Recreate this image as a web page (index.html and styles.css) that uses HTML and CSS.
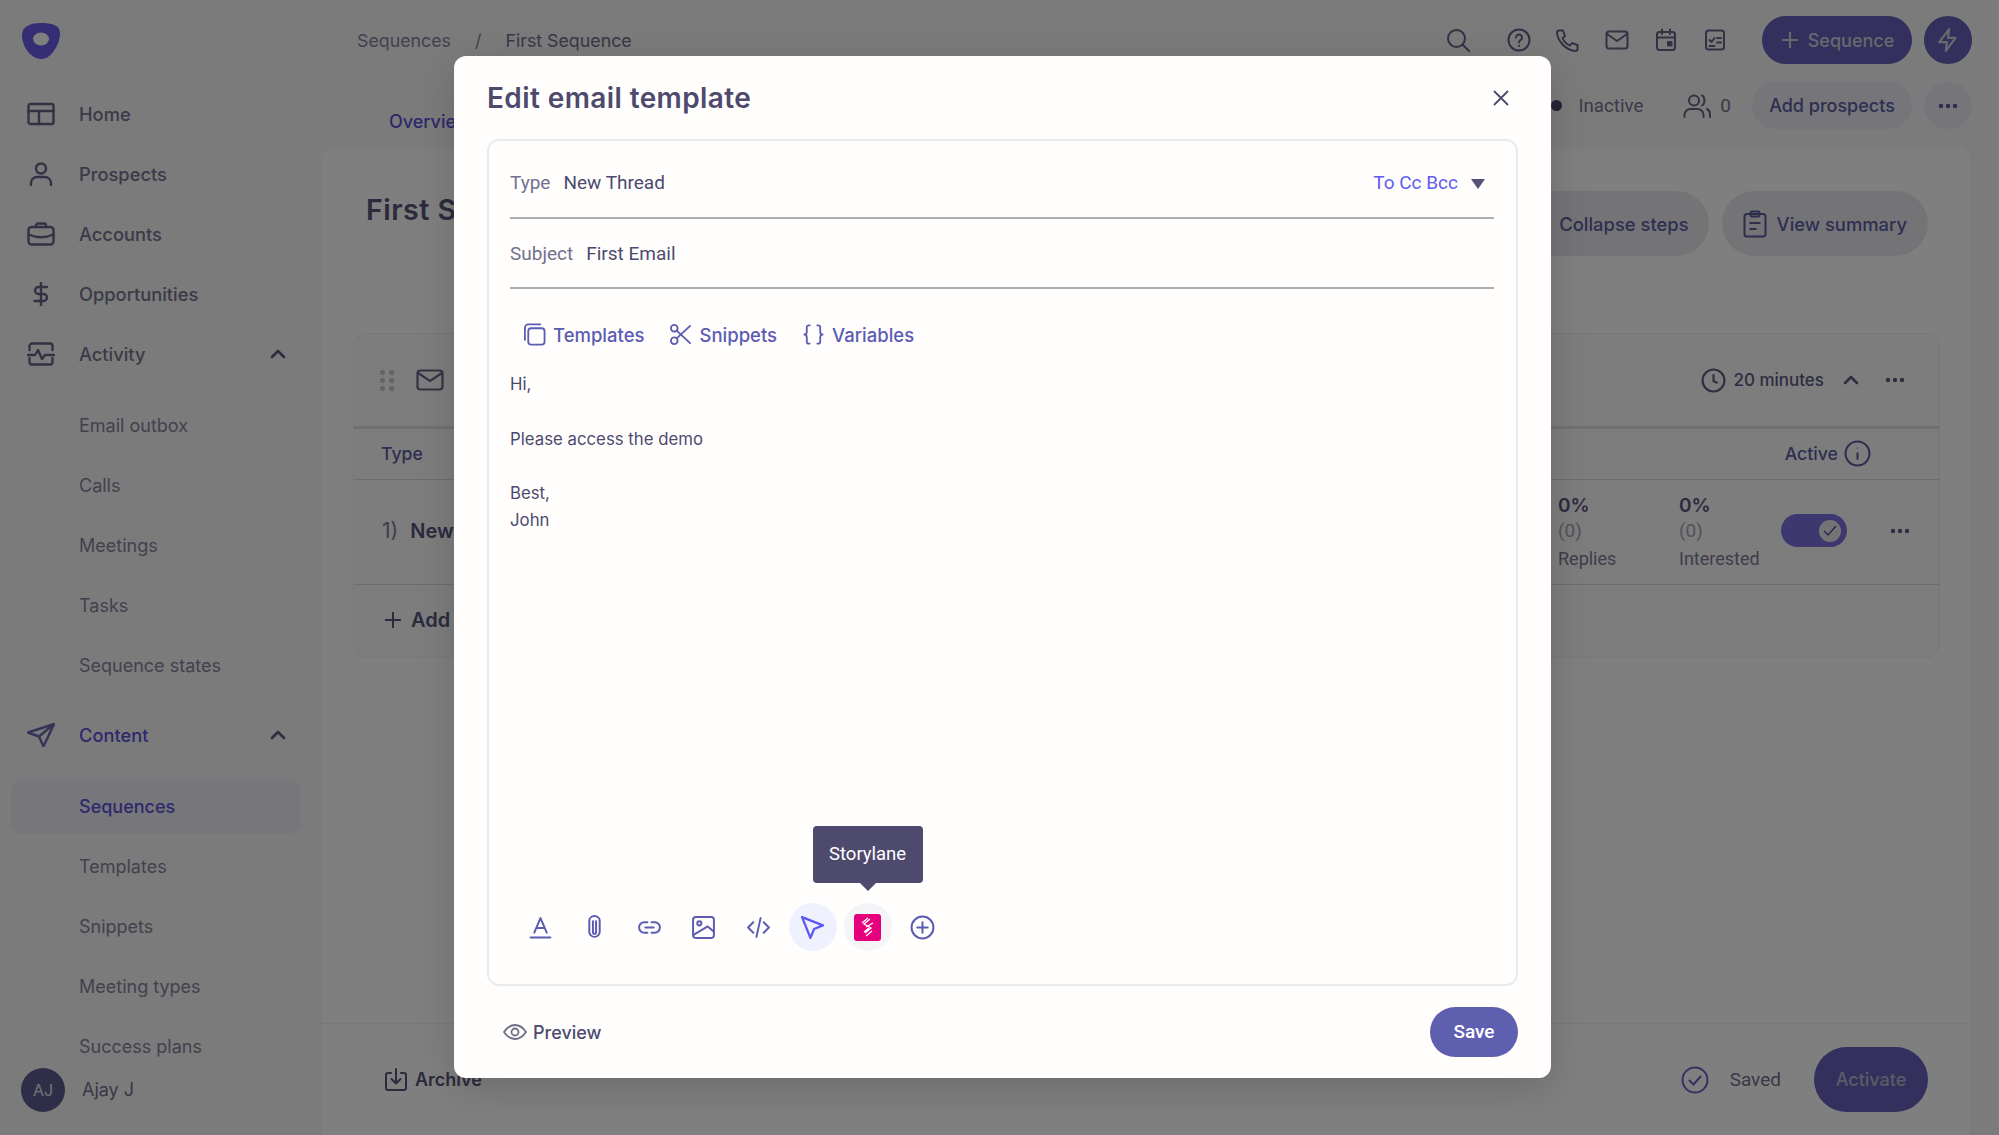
FILE: index.html
```html
<!DOCTYPE html>
<html lang="en">
<head>
    <meta charset="UTF-8">
    <title>Edit email template</title>
    <link rel="stylesheet" href="styles.css">
</head>
<body>
<svg class="defs" width="0" height="0">
    <symbol id="dots" viewBox="0 0 20 6"><circle cx="3" cy="3" r="2.2"/><circle cx="10" cy="3" r="2.2"/><circle cx="17" cy="3" r="2.2"/></symbol>
    <symbol id="up" viewBox="0 0 16 10"><path d="M2 8l6-6 6 6" fill="none" stroke="currentColor" stroke-width="2.6" stroke-linecap="round" stroke-linejoin="round"/></symbol>
</svg>
<div class="app">
    <!-- sidebar -->
    <aside class="side">
        <div class="logo">
            <svg width="38" height="36" viewBox="0 0 38 36"><path d="M19 0c10 0 19 2 19 10 0 12-9 26-19 26C9 36 0 24 0 12 0 3 9 0 19 0z" fill="#6a5ce8"/><ellipse cx="19" cy="16" rx="8" ry="6.5" fill="#fff"/></svg>
        </div>
        <div class="nav">
            <a class="nav-item">
                <svg class="nav-ico" viewBox="0 0 28 24"><rect x="1.5" y="2" width="25" height="20" rx="2"/><path d="M1.5 9h25M12 9v13"/></svg>
                Home
            </a>
            <a class="nav-item">
                <svg class="nav-ico" viewBox="0 0 28 24"><circle cx="14" cy="6.5" r="5"/><path d="M4 23v-2a6 6 0 0 1 6-6h8a6 6 0 0 1 6 6v2"/></svg>
                Prospects
            </a>
            <a class="nav-item">
                <svg class="nav-ico" viewBox="0 0 28 24"><rect x="1.5" y="5" width="25" height="17.5" rx="3"/><path d="M9 5V3.5a2 2 0 0 1 2-2h6a2 2 0 0 1 2 2V5M1.5 12.5c8 3.5 17 3.5 25 0"/></svg>
                Accounts
            </a>
            <a class="nav-item">
                <svg class="nav-ico" viewBox="0 0 28 24"><path d="M14 0v24M20 5h-8.5a3.5 3.5 0 0 0 0 7h5a3.5 3.5 0 0 1 0 7H7.500"/></svg>
                Opportunities
            </a>
            <a class="nav-item">
                <svg class="nav-ico" viewBox="0 0 28 24"><path d="M2.500 8V4A2.500 2.500 0 0 1 5 1.500h18A2.500 2.500 0 0 1 25.500 4v4M2.500 16v4A2.500 2.500 0 0 0 5 22.500h18a2.500 2.500 0 0 0 2.500-2.500v-4M1 13h7l3-5 4 9 3-4h9"/></svg>
                Activity
                <svg class="chev"><use href="#up"/></svg>
            </a>
            <div class="sub">
                <a class="sub-item">Email outbox</a>
                <a class="sub-item">Calls</a>
                <a class="sub-item">Meetings</a>
                <a class="sub-item">Tasks</a>
                <a class="sub-item">Sequence states</a>
            </div>
            <a class="nav-item current">
                <svg class="nav-ico" viewBox="0 0 28 24"><path d="M27 1L1 9.500l11 4 4.500 10L27 1zM12 13.500L27 1"/></svg>
                Content
                <svg class="chev"><use href="#up"/></svg>
            </a>
            <div class="sub">
                <a class="sub-item active">Sequences</a>
                <a class="sub-item">Templates</a>
                <a class="sub-item">Snippets</a>
                <a class="sub-item">Meeting types</a>
                <a class="sub-item">Success plans</a>
            </div>
        </div>
        <div class="user">
            <span class="avatar">AJ</span>
            Ajay J
        </div>
    </aside>

    <div class="main">
        <!-- top bar -->
        <div class="top">
            <div class="crumbs"><span>Sequences</span><span>/</span><span class="crumb-now">First Sequence</span></div>
            <div class="top-icons">
                <svg class="t-ico search" viewBox="0 0 24 24"><circle cx="10.500" cy="10.500" r="8.500"/><path d="M17 17l6 6"/></svg>
                <svg class="t-ico help" viewBox="0 0 24 24"><circle cx="12" cy="12" r="10.500"/><path d="M9 9.500a3 3 0 1 1 4.500 2.600c-1 .6-1.500 1.200-1.500 2.400M12 17.800v.2"/></svg>
                <svg class="t-ico" viewBox="0 0 24 24"><path d="M3 2.500h4l2 5.500-2.500 2a13 13 0 0 0 7.500 7.500l2-2.500 5.500 2v4c0 1-1 2-2 2C10 22.500 1.500 13 1 4.500c0-1 1-2 2-2z"/></svg>
                <svg class="t-ico" viewBox="0 0 24 24"><rect x="1.500" y="3.500" width="21" height="17" rx="2.500"/><path d="M2 6l10 7 10-7"/></svg>
                <svg class="t-ico" viewBox="0 0 24 24"><rect x="3" y="4" width="18" height="18" rx="2.500"/><path d="M3 9.500h18M8 1.500V6M16 1.500V6"/><rect x="14" y="14" width="3.500" height="3.500" fill="currentColor"/></svg>
                <svg class="t-ico" viewBox="0 0 24 24"><rect x="3" y="2.500" width="18" height="19" rx="2.500"/><path d="M6.500 12l2 2 3-4M14 10h4M14 14.500h4M6.500 18h5"/></svg>
            </div>
            <a class="btn-seq">
                <svg class="plus" viewBox="0 0 20 20"><path d="M10 2v16M2 10h16"/></svg>
                Sequence
            </a>
            <a class="btn-round dark">
                <svg viewBox="0 0 24 24" width="26" height="26"><path d="M13 2L4 14h7l-1 8 9-12h-7l1-8z" fill="none" stroke="currentColor" stroke-width="2" stroke-linejoin="round"/></svg>
            </a>
        </div>

        <!-- tabs -->
        <div class="tabs">
            <a class="tab">Overview</a>
            <div class="tabs-right">
                <span class="status-dot"></span>
                <span class="status">Inactive</span>
                <svg class="t-ico people" viewBox="0 0 28 24"><circle cx="11" cy="6.500" r="5"/><path d="M1.500 23v-2a6 6 0 0 1 6-6h7a6 6 0 0 1 6 6v2M19 1.500c3 1 3.500 8 0 10M24 15c2 1 3 3 3 6v2"/></svg>
                <span class="count">0</span>
                <a class="btn-add">Add prospects</a>
                <a class="btn-round soft"><svg width="20" height="6"><use href="#dots"/></svg></a>
            </div>
        </div>

        <!-- sequence panel -->
        <div class="panel">
            <div class="panel-head">
                <h1 class="panel-title">First Sequence</h1>
                <div class="panel-btns">
                    <a class="btn-soft collapse">Collapse steps</a>
                    <a class="btn-soft summary">
                        <svg class="clip" viewBox="0 0 24 28"><rect x="1.500" y="4" width="21" height="22.500" rx="2.500"/><rect x="7.500" y="1.500" width="9" height="5" rx="1.500"/><path d="M6.500 13h11M6.500 19h7"/></svg>
                        View summary
                    </a>
                </div>
            </div>

            <div class="step">
                <div class="step-head">
                    <span class="grip"><i></i><i></i><i></i><i></i><i></i><i></i></span>
                    <svg class="step-mail" viewBox="0 0 28 22"><rect x="1.500" y="1.500" width="25" height="19" rx="3"/><path d="M2 4l12 8 12-8"/></svg>
                    <div class="step-right">
                        <svg class="clock" viewBox="0 0 24 24"><circle cx="12" cy="12" r="10.500"/><path d="M12 6v6.500l4 2"/></svg>
                        <span class="mins">20 minutes</span>
                        <svg class="chev small"><use href="#up"/></svg>
                        <svg class="more"><use href="#dots"/></svg>
                    </div>
                </div>
                <div class="step-cols">
                    <span>Type</span>
                    <div class="cols-right">
                        <span>Active</span>
                        <svg class="info" viewBox="0 0 26 26"><circle cx="13" cy="13" r="11.500"/><path d="M13 12v7M13 7.500v.5"/></svg>
                    </div>
                </div>
                <div class="step-row">
                    <span class="row-name"><span class="row-num">1)</span> New</span>
                    <div class="row-right">
                        <div class="stat"><b>0%</b><span class="paren">(0)</span><span>Replies</span></div>
                        <div class="stat wide"><b>0%</b><span class="paren">(0)</span><span>Interested</span></div>
                        <span class="toggle"><span class="knob"><svg width="14" height="12" viewBox="0 0 14 12"><path d="M1 6l4 4 8-9" fill="none" stroke="#4038a0" stroke-width="1.200"/></svg></span></span>
                        <svg class="more"><use href="#dots"/></svg>
                    </div>
                </div>
                <div class="step-add">
                    <svg class="plus" viewBox="0 0 20 20"><path d="M10 2v16M2 10h16"/></svg>
                    Add step
                </div>
            </div>

            <div class="bottom">
                <a class="archive">
                    <svg class="t-ico" viewBox="0 0 24 24"><path d="M7 5H4a2 2 0 0 0-2 2v13a2 2 0 0 0 2 2h16a2 2 0 0 0 2-2V7a2 2 0 0 0-2-2h-3M12 1v14M7.500 11l4.500 4.500 4.500-4.500"/></svg>
                    Archive
                </a>
                <div class="bottom-right">
                    <svg class="saved-ico" viewBox="0 0 28 28"><circle cx="14" cy="14" r="12.500"/><path d="M8 14l4.500 4.500L20 10"/></svg>
                    <span class="saved">Saved</span>
                    <a class="btn-activate">Activate</a>
                </div>
            </div>
        </div>
    </div>
</div>

<div class="scrim"></div>

<!-- modal -->
<div class="modal">
    <div class="modal-head">
        <h2>Edit email template</h2>
        <svg class="close" viewBox="0 0 18 18"><path d="M2 2l14 14M16 2L2 16"/></svg>
    </div>
    <div class="editor">
        <div class="field type-field">
            <label>Type</label><span>New Thread</span>
            <a class="to-cc">To Cc Bcc</a>
            <svg class="caret" width="14" height="10" viewBox="0 0 14 10"><path d="M0 0h14L7 10z"/></svg>
        </div>
        <div class="field subject-field">
            <label>Subject</label><span>First Email</span>
        </div>
        <div class="inserts">
            <a class="insert">
                <svg class="i-ico" viewBox="0 0 24 24"><rect x="5.500" y="5.500" width="17" height="17" rx="3"/><path d="M2 17.500V5a3.500 3.500 0 0 1 3.500-3.500H18"/></svg>
                Templates
            </a>
            <a class="insert">
                <svg class="i-ico" viewBox="0 0 24 24"><circle cx="5.500" cy="5.500" r="3.500"/><circle cx="5.500" cy="18.500" r="3.500"/><path d="M8 8l14 13M8 16L22 3"/></svg>
                Snippets
            </a>
            <a class="insert">
                <svg class="i-ico" viewBox="0 0 24 24"><path d="M8 2.500H7a2 2 0 0 0-2 2V9c0 1.500-1 3-2.500 3C4 12 5 13.500 5 15v4.500a2 2 0 0 0 2 2h1M16 2.500h1a2 2 0 0 1 2 2V9c0 1.500 1 3 2.500 3-1.500 0-2.500 1.500-2.500 3v4.500a2 2 0 0 1-2 2h-1"/></svg>
                Variables
            </a>
        </div>
        <div class="mail-body">
            <p>Hi,</p>
            <p><br></p>
            <p>Please access the demo</p>
            <p><br></p>
            <p>Best,</p>
            <p>John</p>
        </div>
        <div class="tools">
            <span class="tool">
                <svg class="tool-ico" viewBox="0 0 24 24"><path d="M6 17L12 3l6 14M8 12.500h8M2.500 21.500h19"/></svg>
            </span>
            <span class="tool">
                <svg class="tool-ico" viewBox="0 0 24 24"><path d="M7 5.500V16a5 5 0 0 0 10 0V5.500a5 4.500 0 0 0-10 0M10.500 6v10.500a1.500 1.500 0 0 0 3 0V6"/></svg>
            </span>
            <span class="tool">
                <svg class="tool-ico" viewBox="0 0 24 24"><path d="M10 7H7a5 5 0 0 0 0 10h3M14 7h3a5 5 0 0 1 0 10h-3M8 12h8"/></svg>
            </span>
            <span class="tool">
                <svg class="tool-ico" viewBox="0 0 24 24"><rect x="2" y="2" width="20" height="20" rx="2.500"/><circle cx="8" cy="8" r="2"/><path d="M2.500 19L16 11l6 5"/></svg>
            </span>
            <span class="tool">
                <svg class="tool-ico" viewBox="0 0 24 24"><path d="M7 7l-5 5 5 5M17 7l5 5-5 5M14 3l-4 18"/></svg>
            </span>
            <span class="tool tool-on">
                <svg class="tool-ico arrow" viewBox="0 0 24 24"><path d="M2 2l20 8-8.500 3.500L10 22 2 2z"/></svg>
            </span>
            <span class="tool tool-hover">
                <span class="tip">Storylane</span>
                <svg class="story" width="27" height="27" viewBox="0 0 27 27"><rect width="27" height="27" rx="3" fill="#e6007e"/><path d="M16 5l-6 5 7 4-6 5M14 4l-6 5M19 9l-7 4M15 14l-5 4M18 17l-6 5" fill="none" stroke="#fff" stroke-width="1.300"/></svg>
            </span>
            <span class="tool">
                <svg class="tool-ico" viewBox="0 0 24 24"><circle cx="12" cy="12" r="10.500"/><path d="M12 7v10M7 12h10"/></svg>
            </span>
        </div>
    </div>
    <div class="modal-foot">
        <a class="preview">
            <svg class="eye" viewBox="0 0 24 16"><path d="M1 8c3-4.500 7-7 11-7s8 2.500 11 7c-3 4.500-7 7-11 7S4 12.500 1 8z"/><circle cx="12" cy="8" r="3.500"/></svg>
            Preview
        </a>
        <a class="btn-save">Save</a>
    </div>
</div>
</body>
</html>
```

FILE: styles.css
```css
* {
    margin: 0;
    padding: 0;
    box-sizing: border-box;
}
html, body {
    width: 1999px;
    height: 1135px;
    overflow: hidden;
}
body {
    position: relative;
    background: #f6f6f7;
    font-family: "Inter", "Noto Sans", sans-serif;
    font-size: 18px;
    color: #5c5a80;
}
.defs {
    position: absolute;
}
svg {
    flex: none;
    display: block;
}
.app {
    display: flex;
    height: 1135px;
}

/* sidebar */
.side {
    width: 322px;
    flex: none;
    display: flex;
    flex-direction: column;
}
.logo {
    height: 84px;
    flex: none;
    padding: 23px 0 0 22px;
}
.nav {
    flex: 1;
    min-height: 0;
    overflow: hidden;
}
.nav-item {
    height: 60px;
    display: flex;
    align-items: center;
    padding: 0 36px 0 27px;
    font-size: 18.3px;
    font-weight: 500;
    color: #747490;
}
.nav-ico {
    width: 28px;
    height: 24px;
    margin-right: 24px;
    fill: none;
    stroke: #64648a;
    stroke-width: 2.4;
    stroke-linejoin: round;
    stroke-linecap: round;
}
.chev {
    width: 16px;
    height: 10px;
    margin-left: auto;
    color: #5c5a80;
}
.nav-item.current {
    color: #5a52d8;
}
.nav-item.current .nav-ico {
    stroke: #6a68b0;
}
.sub {
    padding: 11px 0 10px;
}
.sub-item {
    height: 60px;
    display: flex;
    align-items: center;
    padding-left: 79px;
    color: #84849c;
}
.sub-item.active {
    height: 55px;
    margin: 2.5px 22px 2.5px 11px;
    padding-left: 68px;
    border-radius: 12px;
    background: #ededf6;
    color: #5a52d8;
    font-weight: 500;
}
.user {
    height: 71px;
    flex: none;
    display: flex;
    align-items: flex-start;
    gap: 17px;
    padding: 4px 0 0 21px;
    line-height: 44px;
    color: #70708c;
}
.avatar {
    width: 44px;
    height: 44px;
    border-radius: 50%;
    background: #5e5c90;
    color: #e4e4ee;
    font-size: 16px;
    text-align: center;
}

/* top bar */
.main {
    flex: 1;
    min-width: 0;
    display: flex;
    flex-direction: column;
}
.top {
    height: 80px;
    flex: none;
    display: flex;
    align-items: center;
    padding: 0 27px 0 35px;
}
.crumbs {
    display: flex;
    gap: 24px;
    font-size: 17.8px;
    color: #84849c;
}
.crumb-now {
    color: #70708c;
}
.top-icons {
    margin-left: auto;
    display: flex;
    align-items: center;
    gap: 25px;
    margin-right: 35px;
    color: #64648a;
}
.t-ico {
    width: 24px;
    height: 24px;
    fill: none;
    stroke: currentColor;
    stroke-width: 2;
    stroke-linejoin: round;
    stroke-linecap: round;
}
.t-ico.search {
    margin-right: 12px;
}
.btn-seq {
    width: 150px;
    height: 48px;
    display: flex;
    align-items: center;
    justify-content: center;
    gap: 8px;
    border-radius: 24px;
    background: #6660bc;
    color: #d0d0dc;
    font-weight: 500;
}
.plus {
    width: 20px;
    height: 20px;
    fill: none;
    stroke: currentColor;
    stroke-width: 2;
}
.btn-round {
    width: 48px;
    height: 48px;
    margin-left: 12px;
    display: flex;
    align-items: center;
    justify-content: center;
    border-radius: 50%;
}
.btn-round.dark {
    background: #6660bc;
    color: #d0d0dc;
}
.btn-round.soft {
    background: #ecebf4;
    fill: #5c5a9c;
    height: 47px;
}

/* tabs */
.tabs {
    height: 68px;
    flex: none;
    display: flex;
    padding: 3px 27px 0 67px;
}
.tab {
    align-self: flex-end;
    padding-bottom: 16px;
    color: #5a52d8;
    font-weight: 500;
}
.tabs-right {
    margin-left: auto;
    height: 47px;
    display: flex;
    align-items: center;
    margin-top: -1px;
}
.status-dot {
    width: 11px;
    height: 11px;
    margin-right: 16px;
    border-radius: 50%;
    background: #4a4a68;
}
.status {
    font-family: "Roboto", sans-serif;
    font-size: 18.7px;
    color: #747490;
    margin-right: 40px;
}
.people {
    width: 28px;
    margin-right: 9px;
    color: #64648a;
}
.count {
    font-family: "Roboto", sans-serif;
    font-size: 19px;
    color: #747490;
    margin-right: 21px;
}
.btn-add {
    width: 160px;
    height: 47px;
    border-radius: 24px;
    background: #ecebf4;
    text-align: center;
    line-height: 47px;
    font-weight: 500;
    color: #5c5ca0;
}

/* panel */
.panel {
    flex: 1;
    min-height: 0;
    margin-right: 29px;
    display: flex;
    flex-direction: column;
    border-radius: 12px 12px 0 0;
    background: #fff;
}
.panel-head {
    height: 185px;
    flex: none;
    display: flex;
    justify-content: space-between;
    padding: 43px 42px 0 44px;
}
.panel-title {
    font-size: 28.5px;
    font-weight: 600;
    letter-spacing: 0.5px;
    line-height: 38px;
    color: #56567a;
}
.panel-btns {
    display: flex;
    gap: 13px;
}
.btn-soft {
    height: 65px;
    display: flex;
    align-items: center;
    gap: 10px;
    border-radius: 33px;
    background: #e8e8ef;
    font-size: 18.4px;
    font-weight: 500;
    color: #5c5ca0;
}
.collapse {
    padding: 0 20px 0 60px;
}
.summary {
    padding: 0 21px 0 21px;
}
.clip {
    width: 24px;
    height: 28px;
    fill: none;
    stroke: #5c5a9c;
    stroke-width: 2;
}

/* step card */
.step {
    margin: 0 30px 0 31px;
    border: 1px solid #efeff2;
    border-radius: 14px;
    background: #fbfbfc;
}
.step-head {
    height: 95px;
    display: flex;
    align-items: center;
    padding: 0 34px 0 26px;
    border-bottom: 3px solid #e0e0e4;
}
.grip {
    width: 14px;
    display: grid;
    grid-template-columns: 5px 5px;
    gap: 3px 4px;
    margin-right: 22px;
}
.grip i {
    height: 5px;
    border-radius: 50%;
    background: #c4c4cc;
}
.step-mail {
    width: 28px;
    height: 22px;
    fill: none;
    stroke: #66668a;
    stroke-width: 2.2;
}
.step-right {
    margin-left: auto;
    display: flex;
    align-items: center;
}
.clock {
    width: 25px;
    height: 25px;
    margin-right: 7px;
    fill: none;
    stroke: #5c5c80;
    stroke-width: 2;
}
.mins {
    font-size: 17px;
    font-weight: 500;
    color: #5c5c80;
    margin-right: 19px;
}
.chev.small {
    margin: 0 26px 0 0;
}
.more {
    width: 20px;
    height: 6px;
    fill: #5c5c80;
}
.step-cols {
    height: 51px;
    display: flex;
    align-items: center;
    justify-content: space-between;
    padding: 0 68px 2px 27px;
    border-bottom: 1px solid #d8d8dc;
    font-size: 17.7px;
    font-weight: 500;
    color: #5c5ca0;
}
.cols-right {
    display: flex;
    align-items: center;
    gap: 6px;
}
.info {
    width: 27px;
    height: 27px;
    fill: none;
    stroke: #5e5ca0;
    stroke-width: 2;
}
.step-row {
    height: 105px;
    display: flex;
    align-items: center;
    justify-content: space-between;
    padding: 0 29px 3px 28px;
    border-bottom: 1px solid #d8d8dc;
}
.row-name {
    font-weight: 600;
    font-size: 20px;
    color: #56567a;
}
.row-num {
    font-weight: 400;
    font-size: 21px;
    color: #7c7c98;
    margin-right: 7px;
}
.row-right {
    display: flex;
    align-items: center;
}
.stat {
    width: 121px;
    display: flex;
    flex-direction: column;
    font-family: "Roboto", sans-serif;
    line-height: 28px;
    color: #7c7c98;
}
.stat.wide {
    width: 102px;
}
.stat b {
    font-family: "Inter", sans-serif;
    font-size: 19px;
    font-weight: 600;
    line-height: 23px;
    margin-top: 5px;
    color: #56567a;
}
.paren {
    color: #a4a4b4;
    font-size: 19px;
}
.toggle {
    width: 66px;
    height: 33px;
    margin-right: 43px;
    display: flex;
    justify-content: flex-end;
    align-items: center;
    padding-right: 6px;
    border-radius: 17px;
    background: #7a70e0;
}
.knob {
    width: 22px;
    height: 22px;
    display: flex;
    align-items: center;
    justify-content: center;
    border-radius: 50%;
    background: #e8e8ee;
}
.step-add {
    height: 72px;
    display: flex;
    align-items: center;
    gap: 8px;
    padding: 0 0 3px 29px;
    font-size: 20px;
    font-weight: 600;
    color: #56567a;
}
.bottom {
    margin-top: auto;
    height: 112px;
    flex: none;
    display: flex;
    justify-content: space-between;
    padding: 23px 42px 0 62px;
    border-top: 1px solid #f0f0f2;
}
.archive {
    height: 65px;
    display: flex;
    align-items: center;
    gap: 7px;
    font-weight: 600;
    color: #56567a;
}
.bottom-right {
    display: flex;
    align-items: center;
    height: 65px;
}
.saved-ico {
    width: 28px;
    height: 28px;
    fill: none;
    stroke: #6a62c0;
    stroke-width: 2;
    margin-right: 21px;
}
.saved {
    font-family: "Roboto", sans-serif;
    font-size: 19px;
    color: #70708c;
    margin-right: 33px;
}
.btn-activate {
    width: 114px;
    height: 65px;
    border-radius: 33px;
    background: #6660bc;
    color: #b8b8cc;
    text-align: center;
    line-height: 65px;
    font-weight: 500;
}

/* modal */
.scrim {
    position: absolute;
    inset: 0;
    background: rgba(0,0,0,0.5);
}
.modal {
    position: absolute;
    left: 454px;
    top: 56px;
    width: 1097px;
    height: 1022px;
    padding: 0 33px;
    display: flex;
    flex-direction: column;
    border-radius: 12px;
    background: #fffefd;
    box-shadow: 0 10px 40px rgba(0,0,0,0.15);
}
.modal-head {
    height: 83px;
    flex: none;
    display: flex;
    align-items: center;
    justify-content: space-between;
    padding: 0 8px 0 0;
}
.modal-head h2 {
    font-size: 28px;
    font-weight: 600;
    letter-spacing: 0.4px;
    color: #4d4a6e;
}
.close {
    width: 18px;
    height: 18px;
    fill: none;
    stroke: #4d4a6e;
    stroke-width: 1.8;
}
.editor {
    flex: 1;
    min-height: 0;
    display: flex;
    flex-direction: column;
    padding: 0 22px 0 21px;
    border: 2px solid #ebebeb;
    border-radius: 12px;
}
.field {
    display: flex;
    align-items: center;
    font-family: "Roboto", sans-serif;
    font-size: 19px;
    border-bottom: 2px solid #aeaeae;
    color: #4d4a6e;
}
.field label {
    color: #72708e;
    margin-right: 13px;
}
.type-field {
    height: 78px;
    padding-top: 6px;
}
.subject-field {
    height: 70px;
}
.to-cc {
    margin-left: auto;
    color: #5f5cf0;
}
.caret {
    margin: 3px 9px 0 13px;
    fill: #55527a;
}
.inserts {
    height: 82px;
    flex: none;
    display: flex;
    align-items: center;
    gap: 25px;
    padding: 9px 0 0 13px;
}
.insert {
    display: flex;
    align-items: center;
    gap: 7px;
    font-size: 18.5px;
    font-weight: 500;
    color: #5b5cb2;
}
.i-ico {
    width: 23px;
    height: 23px;
    fill: none;
    stroke: currentColor;
    stroke-width: 1.9;
    stroke-linecap: round;
    stroke-linejoin: round;
}
.mail-body {
    font-size: 16.8px;
    line-height: 27.3px;
    color: #4d4a6e;
}
.tools {
    margin: auto 0 33px 6px;
    height: 48px;
    display: flex;
    gap: 6.6px;
}
.tool {
    position: relative;
    width: 48px;
    height: 48px;
    display: flex;
    align-items: center;
    justify-content: center;
    border-radius: 50%;
}
.tool-ico {
    width: 25px;
    height: 25px;
    fill: none;
    stroke: #5b5cb2;
    stroke-width: 1.9;
    stroke-linecap: round;
    stroke-linejoin: round;
}
.tool-on {
    background: #f0f1ff;
}
.tool-ico.arrow {
    stroke: #5a58f0;
    stroke-width: 2.2;
}
.tool-hover {
    background: #f5f5f7;
}
.tip {
    position: absolute;
    left: -31px;
    bottom: 68px;
    width: 110px;
    height: 57px;
    border-radius: 4px;
    background: #4d4a6e;
    color: #fff;
    font-family: "Roboto", sans-serif;
    font-size: 18.5px;
    line-height: 57px;
    text-align: center;
}
.tip::after {
    content: "";
    position: absolute;
    left: 47px;
    top: 57px;
    border: 8px solid transparent;
    border-top-color: #4d4a6e;
    border-bottom: 0;
}
.modal-foot {
    height: 92px;
    flex: none;
    display: flex;
    align-items: center;
    justify-content: space-between;
    padding-left: 16px;
}
.preview {
    display: flex;
    align-items: center;
    gap: 6px;
    font-weight: 500;
    color: #4d4a6e;
}
.eye {
    width: 24px;
    height: 16px;
    fill: none;
    stroke: #6e6e84;
    stroke-width: 1.8;
}
.btn-save {
    width: 88px;
    height: 50px;
    border-radius: 25px;
    background: #5f5fb0;
    color: #fff;
    text-align: center;
    line-height: 50px;
    font-family: "Roboto", sans-serif;
    font-size: 19px;
    font-weight: 500;
}
```
